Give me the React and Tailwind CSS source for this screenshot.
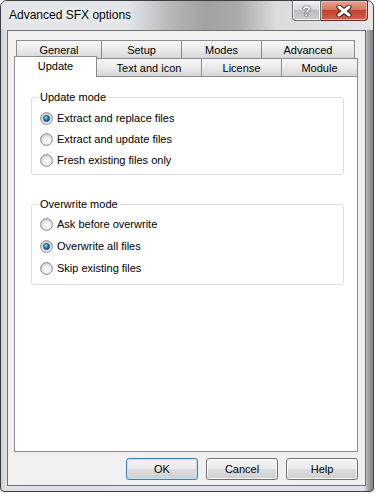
import React from 'react';

const font = { fontFamily: '"Liberation Sans", Arial, sans-serif' };

const Radio = ({ checked }) => (
  <svg width="13" height="13" viewBox="0 0 13 13" className="shrink-0">
    <defs>
      <radialGradient id="rOff" cx="0.55" cy="0.6" r="0.6">
        <stop offset="0%" stopColor="#ffffff" />
        <stop offset="55%" stopColor="#ececec" />
        <stop offset="100%" stopColor="#c6c6c6" />
      </radialGradient>
      <radialGradient id="rOn" cx="0.4" cy="0.35" r="0.7">
        <stop offset="0%" stopColor="#9ee3fc" />
        <stop offset="45%" stopColor="#2683c6" />
        <stop offset="100%" stopColor="#0c3a66" />
      </radialGradient>
    </defs>
    <circle cx="6.5" cy="6.5" r="5.9" fill="url(#rOff)" stroke="#8e8f8f" strokeWidth="1" />
    {checked && <circle cx="6.5" cy="6.5" r="3.2" fill="url(#rOn)" stroke="#1b4c79" strokeWidth="0.6" />}
  </svg>
);

const Group = ({ title, options, checked, rowClass, padClass, heightClass, extra }) => (
  <div className={`relative w-[313px] ${heightClass} border border-[#d5dfe5] rounded-[3px] ${padClass} pl-[8px] ${extra}`}>
    <span className="absolute -top-[7px] left-[6px] px-[2px] bg-white text-[11px] leading-[13px] text-black">
      {title}
    </span>
    {options.map((o, i) => (
      <div key={o} className={`flex items-center gap-[4px] ${rowClass}`}>
        <Radio checked={i === checked} />
        <span className="text-[11px] leading-[13px] text-black">{o}</span>
      </div>
    ))}
  </div>
);

const Tab = ({ label, w, first, selected }) => (
  <div
    className={`${w} flex justify-center border-t border-r border-[#898c95] text-[11px] leading-[13px] text-black ${
      first ? 'border-l' : ''
    } ${
      selected
        ? 'h-[21px] bg-white relative z-10 pt-[3px]'
        : 'h-[18px] bg-linear-to-b from-[#f6f6f6] via-[#ebebeb] to-[#d6d6d6] pt-[3px]'
    }`}
  >
    {label}
  </div>
);

const Button = ({ label, primary }) => (
  <button
    className={`w-[72px] h-[22px] rounded-[3px] border text-[11px] text-black bg-[linear-gradient(180deg,#f2f2f2_0%,#ebebeb_50%,#dddddd_50%,#cfcfcf_100%)] ${
      primary
        ? 'border-[#3c7fb1] shadow-[inset_0_0_0_1px_#bfe6f8]'
        : 'border-[#707070] shadow-[inset_0_0_0_1px_#fbfbfb]'
    }`}
  >
    {label}
  </button>
);

export default function App() {
  return (
    <div className="w-[376px] h-[496px] bg-white overflow-hidden" style={font}>
      <div className="w-[374px] h-[492px] rounded-t-[7px] rounded-b-[4px] border border-[#3b3e43] flex flex-col bg-[linear-gradient(90deg,#c9ccd0_0px,#dde0e3_4px,#dfe2e5_calc(100%_-_9px),#a3a5a8_calc(100%_-_5px),#7f8184_100%)]">
        {/* Title bar */}
        <div className="h-[29px] shrink-0 flex justify-between items-start rounded-t-[6px] pr-[5px] bg-[linear-gradient(90deg,#e3e6e9_0%,#e3e6e9_34%,#b4b6b8_46%,#9fa1a3_55%,#a9abad_64%,#dadde0_74%,#e3e6e9_100%)]">
          <div className="pl-[8px] pt-[7px] text-[12px] leading-[15px] text-black [text-shadow:0_0_6px_#ffffff,0_0_6px_#ffffff]">
            Advanced SFX options
          </div>
          <div className="flex">
            <div className="w-[29px] h-[20px] border border-t-0 border-[#6d7075] rounded-bl-[4px] bg-[linear-gradient(180deg,#eef0f2_0%,#d4d8dc_45%,#b8bdc2_50%,#c9cdd1_100%)] flex justify-center items-center shadow-[inset_0_0_0_1px_#f4f5f6]">
              <span className="text-[14px] font-bold leading-none text-white [text-shadow:0_0_1px_#2a2a2a,0_0_1px_#2a2a2a,0_0_1px_#2a2a2a]">?</span>
            </div>
            <div className="w-[47px] h-[20px] border border-l-0 border-t-0 border-[#6b2c24] rounded-br-[4px] bg-[linear-gradient(180deg,#e9a797_0%,#d8765f_45%,#c3412e_50%,#d1614c_100%)] flex justify-center items-center shadow-[inset_0_0_0_1px_#efb7a9]">
              <svg width="16" height="12" viewBox="0 0 16 12">
                <path d="M3 2 L13 10 M13 2 L3 10" stroke="#3a1a14" strokeWidth="5" strokeLinecap="round" />
                <path d="M3 2 L13 10 M13 2 L3 10" stroke="#ffffff" strokeWidth="3" strokeLinecap="round" />
              </svg>
            </div>
          </div>
        </div>

        {/* Client area */}
        <div className="flex-1 ml-[6px] mr-[7px] mb-[5px] border border-[#6e7176] bg-[#f0f0f0] pt-[9px] pl-[6px]">
          <div className="w-[344px]">
            <div className="flex pl-[2px]">
              <Tab label="General" w="w-[86px]" first />
              <Tab label="Setup" w="w-[80px]" />
              <Tab label="Modes" w="w-[80px]" />
              <Tab label="Advanced" w="w-[93px]" />
            </div>
            <div className="flex items-start -mt-[2px] h-[20px] relative">
              <Tab label="Update" w="w-[83px]" first selected />
              <div className="flex mt-[2px]">
                <Tab label="Text and icon" w="w-[105px]" />
                <Tab label="License" w="w-[80px]" />
                <Tab label="Module" w="w-[76px]" />
              </div>
            </div>
            <div className="h-[376px] bg-white border border-[#898c95] pl-[16px] pt-[20px]">
              <Group
                title="Update mode"
                options={['Extract and replace files', 'Extract and update files', 'Fresh existing files only']}
                checked={0}
                rowClass="h-[21px]"
                padClass="pt-[10px]"
                heightClass="h-[78px]"
                extra=""
              />
              <Group
                title="Overwrite mode"
                options={['Ask before overwrite', 'Overwrite all files', 'Skip existing files']}
                checked={1}
                rowClass="h-[22px]"
                padClass="pt-[8px]"
                heightClass="h-[81px]"
                extra="mt-[29px]"
              />
            </div>
            <div className="flex justify-end gap-[8px] mt-[6px]">
              <Button label="OK" primary />
              <Button label="Cancel" />
              <Button label="Help" />
            </div>
          </div>
        </div>
      </div>
    </div>
  );
}
